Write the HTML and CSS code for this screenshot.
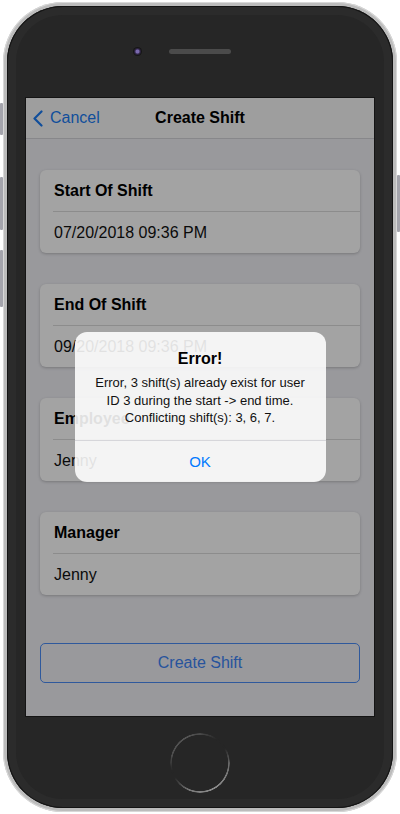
FILE: index.html
```html
<!DOCTYPE html>
<html lang="en">
<head>
    <meta charset="UTF-8">
    <meta name="viewport" content="width=device-width, initial-scale=1.0">
    <title>Create Shift</title>
    <link rel="stylesheet" href="styles.css">
</head>
<body>
    <div class="phone">
        <span class="side-btn mute"></span>
        <span class="side-btn vol-up"></span>
        <span class="side-btn vol-down"></span>
        <span class="side-btn power"></span>

        <div class="phone-body">
            <div class="phone-top">
                <span class="camera"></span>
                <span class="speaker"></span>
                <span></span>
            </div>

            <div class="screen">
                <header class="navbar">
                    <a class="nav-back" href="#">
                        <svg width="11" height="17" viewBox="0 0 11 17">
                            <path d="M9.5 1.5 L2.5 8.5 L9.5 15.5" fill="none" stroke="currentColor" stroke-width="2.2" stroke-linecap="round" stroke-linejoin="round"/>
                        </svg>
                        Cancel
                    </a>
                    <h1>Create Shift</h1>
                    <span></span>
                </header>

                <main class="form">
                    <div class="card">
                        <div class="card-label">Start Of Shift</div>
                        <div class="card-value">07/20/2018 09:36 PM</div>
                    </div>
                    <div class="card">
                        <div class="card-label">End Of Shift</div>
                        <div class="card-value">09/20/2018 09:36 PM</div>
                    </div>
                    <div class="card">
                        <div class="card-label">Employee</div>
                        <div class="card-value">Jenny</div>
                    </div>
                    <div class="card">
                        <div class="card-label">Manager</div>
                        <div class="card-value">Jenny</div>
                    </div>
                    <button class="submit">Create Shift</button>
                </main>

                <!-- error alert over the form -->
                <div class="overlay">
                    <div class="alert">
                        <h2>Error!</h2>
                        <p>Error, 3 shift(s) already exist for user ID 3 during the start -&gt; end time. Conflicting shift(s): 3, 6, 7.</p>
                        <button>OK</button>
                    </div>
                </div>
            </div>

            <div class="phone-bottom">
                <span class="home-btn"></span>
            </div>
        </div>
    </div>
</body>
</html>
```

FILE: styles.css
```css
/* Page */
body {
    margin: 0;
    background: #fff;
    font-family: "Liberation Sans", Arial, sans-serif;
}

/* Phone frame */
.phone {
    position: relative;
    box-sizing: border-box;
    width: 394px;
    height: 810px;
    margin: 2px 3px;
    padding: 4px;
    border-radius: 60px;
    background: #bcbcbc;
    box-shadow: inset 0 0 0 1px #d8d8d8;
}

.phone-body {
    box-sizing: border-box;
    height: 100%;
    border-radius: 56px;
    background: #262626;
    display: flex;
    flex-direction: column;
    align-items: center;
    box-shadow: inset 0 0 0 1px #141414, inset 0 0 0 9px #2b2b2b;
}

.side-btn {
    position: absolute;
    width: 3px;
    background: #a4a4ac;
    border-radius: 1px;
}

.mute { left: -3px; top: 101px; height: 32px; }
.vol-up { left: -3px; top: 175px; height: 53px; }
.vol-down { left: -3px; top: 248px; height: 57px; }
.power { right: -3px; top: 173px; height: 57px; }

.phone-top {
    width: 100%;
    height: 91px;
    display: grid;
    grid-template-columns: 1fr auto 1fr;
    align-items: center;
}

.camera {
    justify-self: end;
    margin-right: 27px;
    width: 9px;
    height: 9px;
    border-radius: 50%;
    background: radial-gradient(circle, #7a6aae 0 1.5px, #35294f 2.5px, #151515 4px);
}

.speaker {
    width: 62px;
    height: 5px;
    border-radius: 3px;
    background: #4b4b4b;
}

.phone-bottom {
    flex: 1;
    display: flex;
    align-items: center;
    justify-content: center;
}

/* metallic ring, bright towards the lower right */
.home-btn {
    width: 60px;
    height: 60px;
    border-radius: 50%;
    background: conic-gradient(#4a4a4a 0deg, #262626 35deg, #262626 60deg, #6e6e6e 95deg, #8e8e8e 150deg, #7a7a7a 200deg, #262626 240deg, #262626 255deg, #4e4e4e 285deg, #555 330deg, #4a4a4a 360deg);
    -webkit-mask: radial-gradient(circle, transparent 27.8px, #000 28.4px, #000 29.6px, transparent 30.2px);
    mask: radial-gradient(circle, transparent 27.8px, #000 28.4px, #000 29.6px, transparent 30.2px);
}

/* Screen */
.screen {
    position: relative;
    box-sizing: border-box;
    width: 350px;
    height: 620px;
    border: 1px solid #141414;
    background: #efeff4;
    overflow: hidden;
}

.navbar {
    height: 40px;
    display: grid;
    grid-template-columns: 1fr auto 1fr;
    align-items: center;
    background: #f8f8f8;
    border-bottom: 1px solid #d4d4d8;
}

.nav-back {
    display: flex;
    align-items: center;
    gap: 7px;
    padding-left: 6px;
    color: #1a7bf2;
    font-size: 16px;
    text-decoration: none;
}

.navbar h1 {
    margin: 0;
    font-size: 16px;
    font-weight: bold;
    color: #000;
}

/* Form cards */
.form {
    display: flex;
    flex-direction: column;
    gap: 31px;
    padding: 31px 14px 0;
}

.card {
    padding-left: 13px;
    background: #fff;
    border-radius: 6px;
    box-shadow: 0 1px 3px rgba(0, 0, 0, 0.22);
}

.card-label {
    height: 41px;
    line-height: 41px;
    padding-left: 1px;
    border-bottom: 1px solid #dcdcdc;
    font-size: 16px;
    font-weight: bold;
    color: #000;
}

.card-value {
    height: 41px;
    line-height: 41px;
    padding-left: 1px;
    font-size: 16px;
    color: #111;
}

.submit {
    margin-top: 17px;
    height: 40px;
    border: 1px solid #4a8cf5;
    border-radius: 5px;
    background: transparent;
    color: #3d84f5;
    font-family: "Liberation Sans", Arial, sans-serif;
    font-size: 16px;
}

/* Alert */
.overlay {
    position: absolute;
    inset: 0;
    background: rgba(0, 0, 0, 0.36);
    display: flex;
    align-items: center;
    justify-content: center;
}

.alert {
    width: 251px;
    background: rgba(255, 255, 255, 0.88);
    border-radius: 12px;
    text-align: center;
    overflow: hidden;
}

.alert h2 {
    margin: 0;
    padding-top: 17px;
    font-size: 16px;
    line-height: 20px;
    color: #000;
}

.alert p {
    margin: 5px 0 0;
    padding: 0 18px 13px;
    font-size: 13px;
    line-height: 17.5px;
    color: #111;
}

.alert button {
    display: block;
    width: 100%;
    height: 42px;
    border: 0;
    border-top: 1px solid #d6d6da;
    background: none;
    color: #007aff;
    font-family: "Liberation Sans", Arial, sans-serif;
    font-size: 15px;
}
```
